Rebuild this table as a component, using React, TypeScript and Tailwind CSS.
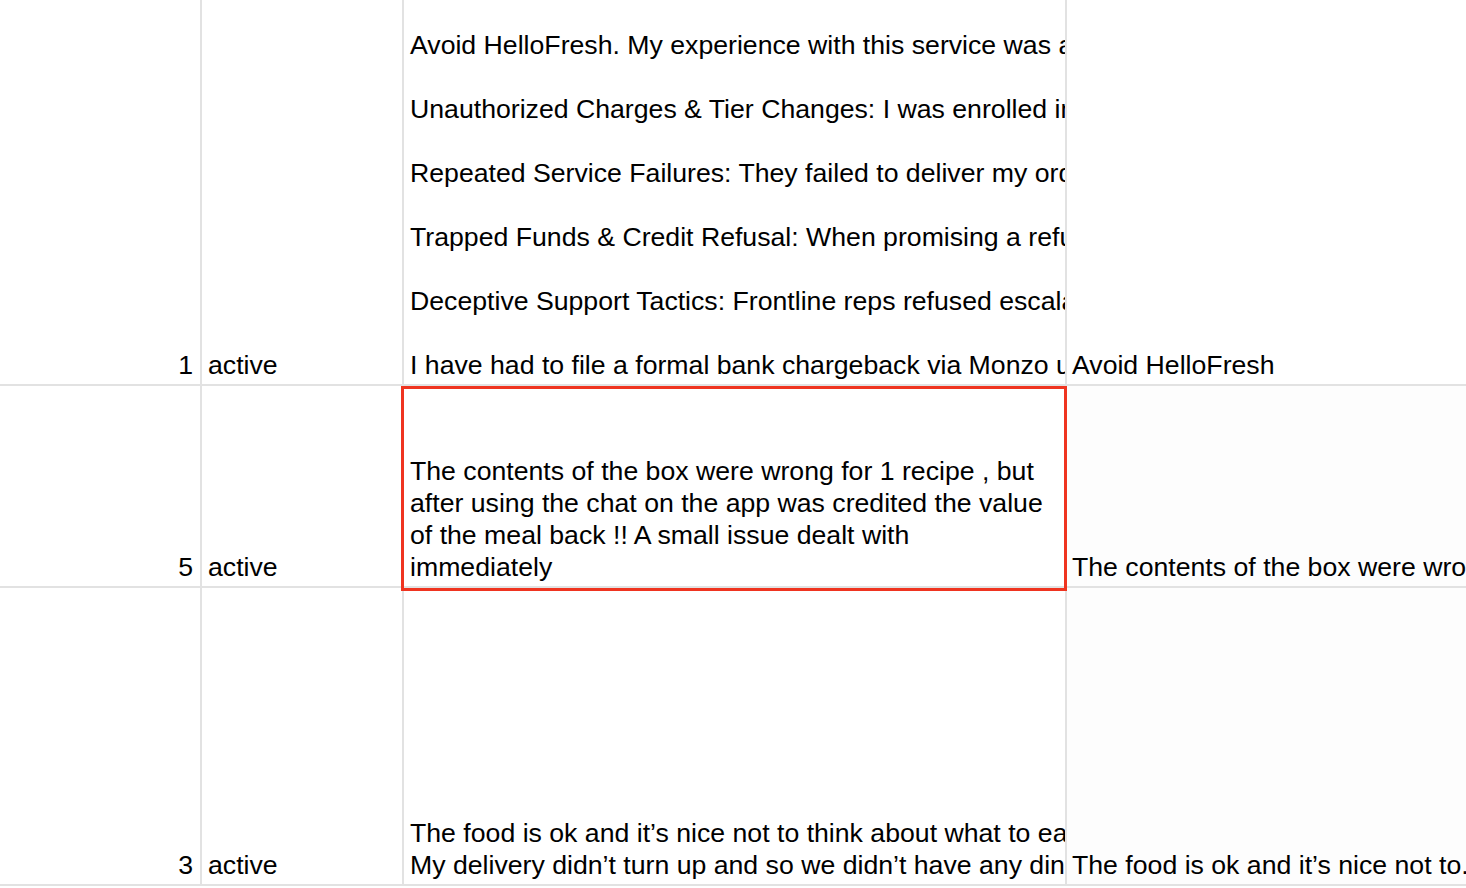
const rowOneLines = [
  "Avoid HelloFresh. My experience with this service was a complete nightmare from start to finish.",
  "",
  "Unauthorized Charges & Tier Changes: I was enrolled in a more expensive plan without my consent.",
  "",
  "Repeated Service Failures: They failed to deliver my order on three separate occasions.",
  "",
  "Trapped Funds & Credit Refusal: When promising a refund they only offered account credit.",
  "",
  "Deceptive Support Tactics: Frontline reps refused escalation and closed my tickets.",
  "",
  "I have had to file a formal bank chargeback via Monzo using all of the evidence above.",
];

const rowTwoLines = [
  "",
  "The contents of the box were wrong for 1 recipe , but",
  "after using the chat on the app was credited the value",
  "of the meal back !! A small issue dealt with",
  "immediately",
];

const rowThreeLines = [
  "The food is ok and it’s nice not to think about what to eat every week.",
  "My delivery didn’t turn up and so we didn’t have any dinner that night.",
];

const cell = "flex flex-col justify-end border-r-2 border-[#e2e2e2] pb-[3px]";

function Lines({ lines }: { lines: string[] }) {
  return (
    <>
      {lines.map((line, i) => (
        <div key={i} className="h-[32px] whitespace-nowrap">
          {line}
        </div>
      ))}
    </>
  );
}

function Row({
  height,
  num,
  body,
  title,
  selected,
  tint,
}: {
  height: string;
  num: string;
  body: string[];
  title: string;
  selected?: boolean;
  tint?: boolean;
}) {
  return (
    <div className={`flex border-b-2 border-[#e2e2e2] ${height}`}>
      <div className={`${cell} w-[202px] shrink-0 items-end pr-[7px]`}>
        <div className="h-[32px]">{num}</div>
      </div>
      <div className={`${cell} w-[202px] shrink-0 pl-[6px]`}>
        <div className="h-[32px]">active</div>
      </div>
      <div
        className={`${cell} relative w-[663px] shrink-0 pl-[6px] ${
          selected ? "" : "overflow-hidden"
        }`}
      >
        <Lines lines={body} />
        {selected && (
          <div className="pointer-events-none absolute left-[-3px] top-0 right-[-2px] bottom-[-5px] z-10 border-[3px] border-[#ef3420]" />
        )}
      </div>
      <div
        className={`flex min-w-0 flex-1 flex-col justify-end overflow-hidden pb-[3px] pl-[5px] ${
          tint ? "bg-[#fdfdfd]" : "bg-white"
        }`}
      >
        <div className="h-[32px] whitespace-nowrap">{title}</div>
      </div>
    </div>
  );
}

export default function App() {
  return (
    <div
      className="h-[888px] w-[1466px] overflow-hidden bg-white text-[26.67px] leading-[32px] text-black"
      style={{ fontFamily: '"Liberation Sans", Arial, sans-serif' }}
    >
      <Row
        height="h-[386px]"
        num="1"
        body={rowOneLines}
        title="Avoid HelloFresh"
      />
      <Row
        height="h-[202px]"
        num="5"
        body={rowTwoLines}
        title="The contents of the box were wrong for 1 recipe , but"
        selected
        tint
      />
      <Row
        height="h-[298px]"
        num="3"
        body={rowThreeLines}
        title="The food is ok and it’s nice not to."
        tint
      />
    </div>
  );
}
